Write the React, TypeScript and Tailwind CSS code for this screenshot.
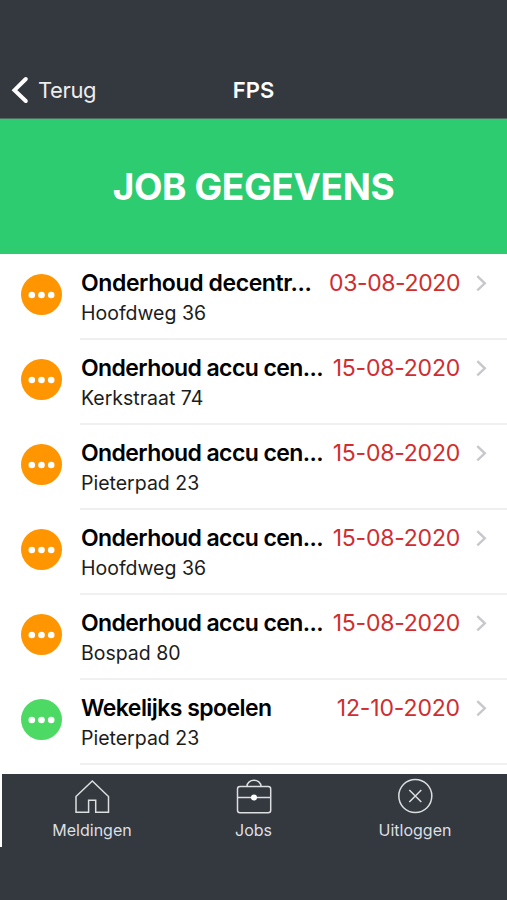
type Job = { title: string; titleClass: string; address: string; date: string; dateClass: string; dot: string };

const accu = 'Onderhoud accu cen...';

const jobs: Job[] = [
  { title: 'Onderhoud decentr...', titleClass: 'tracking-[-0.4px]', address: 'Hoofdweg 36', date: '03-08-2020', dateClass: 'tracking-[-0.4px]', dot: 'bg-[#ff9500]' },
  { title: accu, titleClass: 'tracking-[-0.6px]', address: 'Kerkstraat 74', date: '15-08-2020', dateClass: 'tracking-[-0.22px]', dot: 'bg-[#ff9500]' },
  { title: accu, titleClass: 'tracking-[-0.6px]', address: 'Pieterpad 23', date: '15-08-2020', dateClass: 'tracking-[-0.22px]', dot: 'bg-[#ff9500]' },
  { title: accu, titleClass: 'tracking-[-0.6px]', address: 'Hoofdweg 36', date: '15-08-2020', dateClass: 'tracking-[-0.22px]', dot: 'bg-[#ff9500]' },
  { title: accu, titleClass: 'tracking-[-0.6px]', address: 'Bospad 80', date: '15-08-2020', dateClass: 'tracking-[-0.22px]', dot: 'bg-[#ff9500]' },
  { title: 'Wekelijks spoelen', titleClass: 'tracking-[-0.55px]', address: 'Pieterpad 23', date: '12-10-2020', dateClass: 'tracking-[-0.15px]', dot: 'bg-[#4cd964]' },
];

function JobRow({ job }: { job: Job }) {
  return (
    <div className="flex h-[85px] pl-[21px]">
      <div className={`mt-[19px] flex size-[41px] shrink-0 items-center justify-center rounded-full ${job.dot}`}>
        <svg className="h-2 w-[27px]" viewBox="0 0 27 8" fill="white">
          <circle cx="3.8" cy="4" r="3.3" />
          <circle cx="13.5" cy="4" r="3.3" />
          <circle cx="23.2" cy="4" r="3.3" />
        </svg>
      </div>
      <div className="ml-[18px] flex-1 border-b-2 border-[#f0f0f0] pl-px">
        <div className="mt-[14px] flex h-7 items-center whitespace-nowrap">
          <span className={`text-[23px] leading-7 font-semibold text-black ${job.titleClass}`}>{job.title}</span>
          <span className={`ml-auto text-[23px] leading-7 text-[#d02d2f] ${job.dateClass}`}>{job.date}</span>
          <svg className="mr-5 ml-4 h-[18px] w-[11px] shrink-0" viewBox="0 0 11 18" fill="none" stroke="#c7c7cc" strokeWidth="2.4">
            <path d="M1.3 2.2 8.8 9.3 1.3 16.4" />
          </svg>
        </div>
        <div className="mt-1 text-[19.5px] leading-6 text-[#1c1c1c]">{job.address}</div>
      </div>
    </div>
  );
}

export default function App() {
  return (
    <div className="flex h-[900px] w-[507px] flex-col overflow-hidden bg-[#34383f] font-['Inter','Liberation_Sans',sans-serif]">
      <header className="grid h-[119px] shrink-0 grid-cols-3 items-end border-b border-[#4f6b60] text-white">
        <div className="flex h-14 items-center pl-[11px]">
          <svg className="h-7 w-[18px]" viewBox="0 0 18 28" fill="none" stroke="white" strokeWidth="4" strokeLinecap="round" strokeLinejoin="miter">
            <path d="M14.8 3 3.5 14.2 14.8 25" />
          </svg>
          <span className="ml-[9px] text-[22px] tracking-[-0.4px] text-[#eceded]">Terug</span>
        </div>
        <h1 className="flex h-14 items-center justify-center text-[22px] font-semibold">FPS</h1>
      </header>
      <div className="flex h-[135px] shrink-0 items-center justify-center bg-[#2ecc71] pt-px text-[37px] font-bold tracking-[-0.4px] text-white">JOB GEGEVENS</div>
      <main className="h-[520px] shrink-0 bg-white pt-px">
        {jobs.map((job, i) => <JobRow key={i} job={job} />)}
      </main>
      <nav className="grid h-[73px] shrink-0 grid-cols-[180px_143px_180px] border-l-2 border-white text-center text-[16px] text-[#dcdfe2]">
        <div className="flex flex-col items-center pt-[5px]">
          <svg className="h-9 w-9" viewBox="0 0 36 36" fill="none" stroke="currentColor" strokeWidth="1.5">
            <path d="M2 17.5 18.3 2 34.5 17.5V33.2H21.7V21.3H14.6V33.2H2Z" />
          </svg>
          <span className="mt-[3px] leading-6">Meldingen</span>
        </div>
        <div className="flex flex-col items-center pt-[5px]">
          <svg className="h-9 w-9" viewBox="0 0 36 36" fill="none" stroke="currentColor" strokeWidth="1.5">
            <rect x="1.5" y="7.5" width="33.2" height="26.3" rx="2.5" />
            <path d="M1.5 18.5H34.7M11 7.5C11 -.8 25 -.8 25 7.5" />
            <circle cx="18" cy="18.5" r="3" fill="white" stroke="none" />
          </svg>
          <span className="mt-[3px] leading-6">Jobs</span>
        </div>
        <div className="flex flex-col items-center pt-[4px]">
          <svg className="h-9 w-9" viewBox="0 0 36 36" fill="none" stroke="currentColor" strokeWidth="1.5">
            <circle cx="18.3" cy="18" r="16.5" />
            <path d="M12.3 12 24.3 24M24.3 12 12.3 24" />
          </svg>
          <span className="mt-1 leading-6">Uitloggen</span>
        </div>
      </nav>
    </div>
  );
}
